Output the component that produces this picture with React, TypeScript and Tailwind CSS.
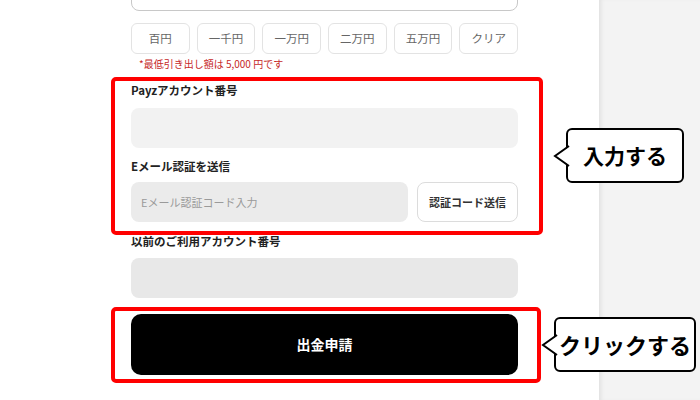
import React from "react";

const amounts = ["百円", "一千円", "一万円", "二万円", "五万円", "クリア"];

function Callout({ text, className }: { text: string; className: string }) {
  return (
    <div
      className={`absolute flex items-center justify-center rounded-[6px] border-2 border-black bg-white font-bold text-black ${className}`}
    >
      <svg
        className="absolute left-[-15px] top-1/2 -translate-y-1/2"
        width="17"
        height="22"
        viewBox="0 0 17 22"
      >
        <polygon points="17,1 2,11 17,21" fill="white" />
        <polyline points="16,1 2,11 16,21" fill="none" stroke="black" strokeWidth="2" strokeLinejoin="miter" />
      </svg>
      {text}
    </div>
  );
}

export default function App() {
  return (
    <div
      className="relative flex h-[400px] w-[700px] overflow-hidden bg-white text-[#222]"
      style={{ fontFamily: '"Noto Sans CJK JP", "Noto Sans", sans-serif' }}
    >
      <div className="w-[599px] shrink-0 pl-[131px]">
        <div className="-mt-[30px] w-[387px]">
          <div className="h-[41px] rounded-lg border border-[#c8c8c8] bg-white" />

          <div className="mt-[12px] grid grid-cols-6 gap-[7px]">
            {amounts.map((a) => (
              <button
                key={a}
                className="flex h-[31px] items-center justify-center rounded-md border border-[#e3e3e3] bg-white text-[11.5px] text-[#666]"
              >
                {a}
              </button>
            ))}
          </div>

          <p className="mt-[3px] pl-[8px] text-[10px] leading-[14px] text-[#c62828]">
            *最低引き出し額は 5,000 円です
          </p>

          <label className="mt-[11px] block text-[11.5px] font-bold leading-[16px]">Payzアカウント番号</label>
          <div className="mt-[10px] h-[40px] rounded-lg bg-[#f2f2f2]" />

          <label className="mt-[10px] block text-[11.5px] font-bold leading-[16px]">Eメール認証を送信</label>
          <div className="mt-[8px] flex h-[40px] gap-[9px]">
            <div className="flex flex-1 items-center rounded-lg bg-[#ebebeb] pl-[10px] text-[11px] text-[#9a9a9a]">
              Eメール認証コード入力
            </div>
            <button className="w-[101px] rounded-lg border border-[#dcdcdc] bg-white text-[11px] font-bold text-[#333]">
              認証コード送信
            </button>
          </div>

          <label className="mt-[11px] block text-[11.5px] font-bold leading-[16px]">以前のご利用アカウント番号</label>
          <div className="mt-[9px] h-[40px] rounded-lg bg-[#e8e8e8]" />

          <button className="mt-[16px] flex h-[61px] w-full items-center justify-center rounded-[10px] bg-black text-[14px] font-bold text-white">
            出金申請
          </button>
        </div>
      </div>

      <div className="flex-1 bg-[#f3f3f3] shadow-[inset_4px_0_4px_-2px_rgba(0,0,0,0.08)]" />

      <div className="absolute left-[111px] top-[77px] h-[158px] w-[432px] rounded-[5px] border-4 border-[#ff0000]" />
      <div className="absolute left-[111px] top-[307px] h-[76px] w-[430px] rounded-[5px] border-4 border-[#ff0000]" />

      <Callout text="入力する" className="left-[566px] top-[128px] h-[55px] w-[118px] text-[21px]" />
      <Callout text="クリックする" className="left-[554px] top-[317px] h-[55px] w-[142px] text-[22px]" />
    </div>
  );
}
